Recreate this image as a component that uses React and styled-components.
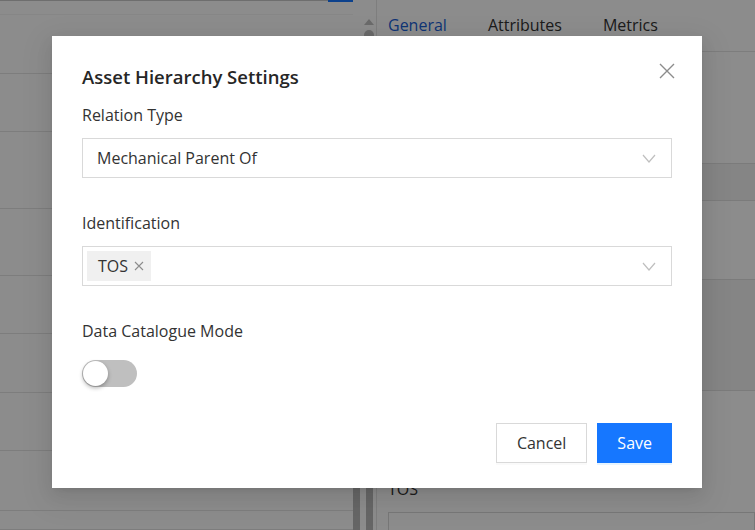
import React from 'react';
import styled, { createGlobalStyle } from 'styled-components';

const GlobalStyle = createGlobalStyle`
  html, body {
    margin: 0;
    padding: 0;
    background: #ffffff;
  }
  * {
    box-sizing: border-box;
  }
`;

const listRows = [59, 58, 77, 67, 58, 59, 58, 60, 19];

const Settings = function () {
  return (
    <Page>
      <GlobalStyle />
      <LeftPane>
        <ListCol>
          <TopStrip>
            <BlueEdge />
          </TopStrip>
          {listRows.map((h, i) => <ListRow key={i} h={h} />)}
        </ListCol>
        <Gutter>
          <ScrollArrow />
          <ScrollThumb />
          <BottomBars>
            <DarkBar />
            <DarkBar />
          </BottomBars>
        </Gutter>
      </LeftPane>

      <RightPane>
        <Tabs>
          <Tab active>General</Tab>
          <Tab>Attributes</Tab>
          <Tab>Metrics</Tab>
        </Tabs>
        <Band h={112} />
        <Band h={37} shade />
        <Band h={79} />
        <Band h={111} shade />
        <BottomSection>
          <BgLabel>TOS</BgLabel>
          <BgInput />
        </BottomSection>
      </RightPane>

      <Mask>
        <Modal>
          <Header>
            <Title>Asset Hierarchy Settings</Title>
            <CloseButton aria-label="close">
              <svg width="16" height="16" viewBox="0 0 16 16">
                <path d="M1 1 L15 15 M15 1 L1 15" stroke="#8c8c8c" strokeWidth="1.4" fill="none" />
              </svg>
            </CloseButton>
          </Header>

          <Field first>
            <Label>Relation Type</Label>
            <Select>
              <SelectValue>Mechanical Parent Of</SelectValue>
              <Chevron />
            </Select>
          </Field>

          <Field>
            <Label>Identification</Label>
            <Select tags>
              <Tag>
                TOS
                <svg width="10" height="10" viewBox="0 0 10 10">
                  <path d="M1 1 L9 9 M9 1 L1 9" stroke="#8c8c8c" strokeWidth="1.1" fill="none" />
                </svg>
              </Tag>
              <Chevron />
            </Select>
          </Field>

          <Field>
            <Label>Data Catalogue Mode</Label>
            <Switch>
              <SwitchThumb />
            </Switch>
          </Field>

          <Footer>
            <Button>Cancel</Button>
            <Button primary>Save</Button>
          </Footer>
        </Modal>
      </Mask>
    </Page>
  );
};

const Chevron = function () {
  return (
    <ChevronIcon width="14" height="9" viewBox="0 0 14 9">
      <path d="M1 1 L7 8 L13 1" stroke="#bfbfbf" strokeWidth="1.2" fill="none" />
    </ChevronIcon>
  );
};

export default Settings;

const Page = styled.div`
  position: relative;
  width: 755px;
  height: 530px;
  overflow: hidden;
  display: flex;
  background: #ffffff;
  font-family: "Open Sans", "Noto Sans", "Liberation Sans", sans-serif;
  color: #333333;
`;

const LeftPane = styled.div`
  width: 377px;
  display: flex;
  border-right: 1px solid #e6e6e6;
`;

const ListCol = styled.div`
  width: 353px;
  display: flex;
  flex-direction: column;
`;

const TopStrip = styled.div`
  height: 15px;
  flex-shrink: 0;
  border-top: 1px solid #c8c8c8;
  background: #ffffff;
  display: flex;
  justify-content: flex-end;
  border-bottom: 1px solid #f4f4f4;
`;

const BlueEdge = styled.div`
  width: 25px;
  height: 2px;
  margin-top: -1px;
  background: #1677ff;
`;

const ListRow = styled.div`
  height: ${(p) => p.h}px;
  flex-shrink: 0;
  border-bottom: 1px solid #e3e3e3;
`;

const Gutter = styled.div`
  flex: 1;
  display: flex;
  flex-direction: column;
  align-items: center;
  padding-top: 19px;
`;

const ScrollArrow = styled.div`
  width: 0;
  height: 0;
  margin-left: 8px;
  border-left: 5px solid transparent;
  border-right: 5px solid transparent;
  border-bottom: 6px solid #c1c1c1;
`;

const ScrollThumb = styled.div`
  width: 10px;
  height: 40px;
  margin-left: 8px;
  margin-top: 5px;
  border-radius: 5px;
  background: #c1c1c1;
`;

const BottomBars = styled.div`
  margin-top: auto;
  height: 60px;
  width: 100%;
  display: flex;
  gap: 6px;
`;

const DarkBar = styled.div`
  width: 7px;
  background: #bababa;
`;

const RightPane = styled.div`
  flex: 1;
  display: flex;
  flex-direction: column;
`;

const Tabs = styled.div`
  height: 52px;
  flex-shrink: 0;
  display: flex;
  align-items: center;
  gap: 41px;
  padding: 0 0 2px 11px;
  border-bottom: 1px solid #e3e3e3;
`;

const Tab = styled.div`
  font-size: 16px;
  color: ${(p) => (p.active ? '#1a5fd6' : '#333333')};
`;

const Band = styled.div`
  height: ${(p) => p.h}px;
  flex-shrink: 0;
  background: ${(p) => (p.shade ? '#f3f3f3' : '#ffffff')};
  border-bottom: 1px solid #e0e0e0;
`;

const BottomSection = styled.div`
  flex: 1;
  display: flex;
  flex-direction: column;
  justify-content: flex-end;
  padding-left: 11px;
`;

const BgLabel = styled.div`
  font-size: 16px;
  line-height: 24px;
  margin-bottom: 11px;
`;

const BgInput = styled.div`
  height: 18px;
  border: 1px solid #d9d9d9;
  border-bottom: none;
`;

const Mask = styled.div`
  position: absolute;
  inset: 0;
  background: rgba(0, 0, 0, 0.45);
  display: flex;
  justify-content: flex-start;
  align-items: flex-start;
  padding: 36px 0 0 52px;
`;

const Modal = styled.div`
  width: 650px;
  background: #ffffff;
  padding: 29px 30px 25px 30px;
  display: flex;
  flex-direction: column;
  box-shadow: 0 6px 16px rgba(0, 0, 0, 0.08), 0 3px 6px -4px rgba(0, 0, 0, 0.12), 0 9px 28px 8px rgba(0, 0, 0, 0.05);
`;

const Header = styled.div`
  display: flex;
  justify-content: space-between;
  align-items: flex-start;
`;

const Title = styled.div`
  font-size: 18.5px;
  font-weight: 600;
  line-height: 24px;
  color: #262626;
`;

const CloseButton = styled.button`
  border: none;
  background: none;
  padding: 0;
  margin: -2px -3px 0 0;
  width: 16px;
  height: 16px;
  display: flex;
  cursor: pointer;
`;

const Field = styled.div`
  display: flex;
  flex-direction: column;
  align-items: flex-start;
  margin-top: ${(p) => (p.first ? '14px' : '33px')};
`;

const Label = styled.div`
  font-size: 16px;
  line-height: 24px;
  color: #333333;
  margin-bottom: 11px;
`;

const Select = styled.div`
  width: 100%;
  height: 40px;
  border: 1px solid #d9d9d9;
  display: flex;
  align-items: center;
  padding: ${(p) => (p.tags ? '0 15px 0 4px' : '0 15px 0 14px')};
`;

const SelectValue = styled.div`
  flex: 1;
  font-size: 16px;
  color: #333333;
`;

const ChevronIcon = styled.svg`
  margin-left: auto;
  flex-shrink: 0;
`;

const Tag = styled.div`
  height: 30px;
  display: flex;
  align-items: center;
  gap: 6px;
  padding: 0 7px 0 11px;
  background: #f0f0f0;
  font-size: 16px;
  color: #333333;
`;

const Switch = styled.div`
  margin-top: 6px;
  width: 55px;
  height: 27px;
  border-radius: 14px;
  background: #bfbfbf;
  display: flex;
  align-items: center;
  padding-left: 1px;
`;

const SwitchThumb = styled.div`
  width: 25px;
  height: 25px;
  border-radius: 50%;
  background: #ffffff;
  box-shadow: 0 2px 4px rgba(0, 0, 0, 0.3);
`;

const Footer = styled.div`
  display: flex;
  justify-content: flex-end;
  gap: 10px;
  margin-top: 36px;
`;

const Button = styled.button`
  height: 40px;
  padding: ${(p) => (p.primary ? '0 19px' : '0 20px')};
  font-family: inherit;
  font-size: 16px;
  border: 1px solid ${(p) => (p.primary ? '#1677ff' : '#d9d9d9')};
  background: ${(p) => (p.primary ? '#1677ff' : '#ffffff')};
  color: ${(p) => (p.primary ? '#ffffff' : '#333333')};
  box-shadow: ${(p) => (p.primary ? '0 2px 0 rgba(5, 145, 255, 0.1)' : '0 2px 0 rgba(0, 0, 0, 0.02)')};
  cursor: pointer;
`;
